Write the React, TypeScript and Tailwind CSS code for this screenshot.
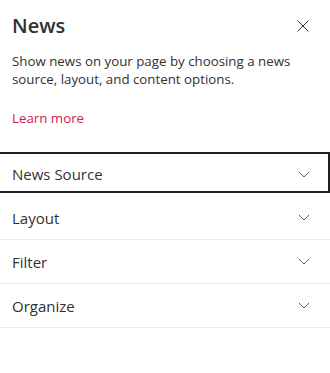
import React from 'react';

const sections = ['News Source', 'Layout', 'Filter', 'Organize'];

function Chevron() {
    return (
        <svg width="12" height="7" viewBox="0 0 12 7" fill="none" className="text-[#605e5c]">
            <path d="M0.8 0.8 L6 6 L11.2 0.8" stroke="currentColor" strokeWidth="1" />
        </svg>
    );
}

export default function App() {
    return (
        <div
            className="w-[330px] h-[373px] bg-white overflow-hidden text-[#323130]"
            style={{ fontFamily: '"Segoe UI", "Open Sans", sans-serif' }}
        >
            <div className="flex items-center justify-between pl-[12px] pr-[21px] pt-[12px]">
                <h2 className="text-[20px] leading-[28px] font-semibold">News</h2>
                <svg width="12" height="12" viewBox="0 0 12 12" fill="none">
                    <path d="M0.5 0.5 L11.5 11.5 M11.5 0.5 L0.5 11.5" stroke="#323130" strokeWidth="1" />
                </svg>
            </div>

            <p className="px-[12px] mt-[12px] text-[13.3px] leading-[18px]">
                Show news on your page by choosing a news source, layout, and content options.
            </p>

            <a href="#" className="block px-[12px] mt-[21px] text-[13.3px] leading-[18px] text-[#d0214f]">
                Learn more
            </a>

            <div className="mt-[25px]">
                {sections.map((name, i) => (
                    <div
                        key={name}
                        className={`relative flex items-center justify-between h-[44px] pl-[12px] pr-[20px] ${
                            i === 0 ? '' : 'border-b border-[#edebe9]'
                        }`}
                    >
                        {i === 0 && (
                            <div className="absolute top-0 h-[41px] left-[-2px] right-0 border-2 border-[#201f1e]" />
                        )}
                        <span className="text-[15px] leading-[20px]">{name}</span>
                        <Chevron />
                    </div>
                ))}
            </div>
        </div>
    );
}
